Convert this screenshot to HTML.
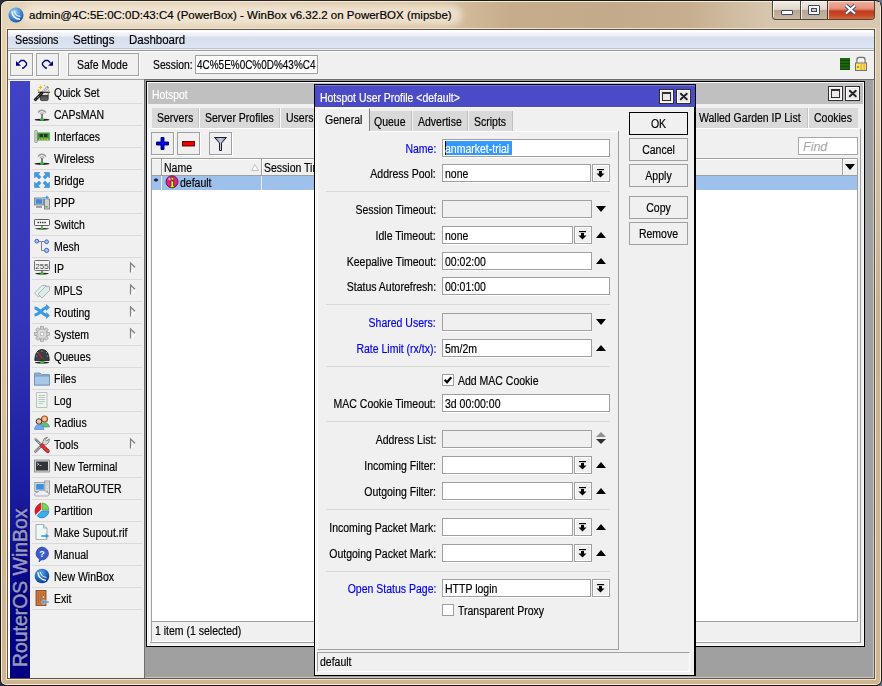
<!DOCTYPE html><html><head><meta charset="utf-8"><style>
*{margin:0;padding:0;box-sizing:border-box}
html,body{width:882px;height:686px;overflow:hidden;background:linear-gradient(90deg,#283048,#6a7488)}
body{font-family:"Liberation Sans",sans-serif;font-size:11px;color:#000;position:relative}
.a{position:absolute}
.t{position:absolute;white-space:nowrap;line-height:13px;font-size:12px;letter-spacing:0;transform:scaleX(0.875);transform-origin:0 0;-webkit-text-stroke:0.18px currentColor}
.r{transform-origin:100% 0}
.c{transform-origin:50% 0}
.btn{position:absolute;border:1px solid #a0a0a0;background:#f0f0f0}
.inp{position:absolute;border:1px solid #a0a0a0;background:#fff}
.dis{background:#f0f0f0}
.blue{color:#0000f0}
svg{position:absolute;overflow:visible}
</style></head><body>
<div class="a" style="left:0px;top:0px;width:882px;height:686px;border-radius:7px 7px 6px 6px;background:#1c1814"></div>
<div class="a" style="left:1px;top:1px;width:880px;height:684px;border-radius:6px 6px 5px 5px;background:#f6ecdc"></div>
<div class="a" style="left:2px;top:2px;width:878px;height:682px;border-radius:5px 5px 4px 4px;background:linear-gradient(#e6d2b4 0,#e2cca8 120px,#dfc69e 320px,#d4bc96 480px,#cdb591 595px,#d0b590 100%)"></div>
<div class="a" style="left:875px;top:2px;width:5px;height:677px;background:linear-gradient(#d8c8b0 0,#d8c8b0 95px,#c8b08c 305px,#d0b690 595px,#d0b690 100%)"></div>
<div class="a" style="left:4px;top:679px;width:874px;height:5px;background:#d0b590"></div>
<div class="a" style="left:2px;top:2px;width:878px;height:26px;border-radius:5px 5px 0 0;background:linear-gradient(90deg,#e4d4ba 0,#e2d0b4 25%,#d8c2a2 50%,#c6ac8a 58%,#c3aa8a 70%,#c6ae8e 78%,#d6c6ae 87%,#d8c8b0 100%)"></div>
<div class="a" style="left:22px;top:5px;width:440px;height:20px;border-radius:10px;background:rgba(246,236,222,0.7);filter:blur(3px)"></div>
<div class="a" style="left:6px;top:28px;width:870px;height:652px;background:#f0e4d2"></div>
<svg style="left:8px;top:7px" width="16" height="16" viewBox="0 0 16 16"><defs><radialGradient id="lg" cx="40%" cy="30%" r="75%"><stop offset="0" stop-color="#a8d4f8"/><stop offset="0.6" stop-color="#3a84d0"/><stop offset="1" stop-color="#1a4e9a"/></radialGradient></defs><circle cx="8" cy="8" r="7.5" fill="url(#lg)"/><path d="M3.8 4.3 A 8.5 8.5 0 0 0 12 12.3" stroke="#fff" stroke-width="1.4" fill="none"/><path d="M6.3 3.8 A 6.2 6.2 0 0 0 12.4 9.4" stroke="#fff" stroke-width="1.1" fill="none" opacity="0.9"/></svg>
<div class="t" style="left:29px;top:7px;font-size:11.5px;line-height:16px;color:#000;letter-spacing:0;transform:none">admin@4C:5E:0C:0D:43:C4 (PowerBox) - WinBox v6.32.2 on PowerBOX (mipsbe)</div>
<div class="a" style="left:772px;top:1px;width:103px;height:19px;border:1px solid #504436;border-top:none;border-radius:0 0 4px 4px;overflow:hidden;background:linear-gradient(#f0ebe4 0,#e4dcd0 40%,#d8ccbc 50%,#b8a890 52%,#c6b6a2 100%);box-shadow:inset 1px 1px 0 rgba(255,255,255,0.8)"><div class="a" style="left:27px;top:0;width:1px;height:18px;background:#504436"></div><div class="a" style="left:28px;top:0;width:1px;height:18px;background:rgba(255,255,255,0.8)"></div><div class="a" style="left:54px;top:0;width:48px;height:18px;border-left:1px solid #503020;background:linear-gradient(#eeb0a0 0,#e49480 40%,#d87058 50%,#c03a1c 55%,#c84828 80%,#d86840 100%);box-shadow:inset 1px 1px 0 rgba(255,230,220,0.8),inset -1px 0 0 rgba(255,230,220,0.5)"></div><div class="a" style="left:8px;top:9px;width:12px;height:5px;background:#fff;border:1px solid #40486a;border-radius:1px"></div><div class="a" style="left:35px;top:4px;width:12px;height:10px;border:1px solid #40486a;border-radius:1px;background:#fff"></div><div class="a" style="left:38px;top:7px;width:6px;height:4px;border:1px solid #40486a;background:#d8c8b0"></div><svg style="left:71px;top:3px" width="13" height="11" viewBox="0 0 13 11"><path d="M2 1.5 L11 9.5 M11 1.5 L2 9.5" stroke="#40486a" stroke-width="4"/><path d="M2 1.5 L11 9.5 M11 1.5 L2 9.5" stroke="#fff" stroke-width="2.2"/></svg></div>
<div class="a" style="left:7px;top:29px;width:868px;height:650px;background:#5e5446"></div>
<div class="a" style="left:8px;top:30px;width:866px;height:648px;background:#f0f0f0"></div>
<div class="a" style="left:8px;top:30px;width:866px;height:18px;background:linear-gradient(#ffffff 0,#fcfdfe 2px,#f1f3f9 3px,#eef1f8 6px,#d8dfee 7px,#d9e0ef 12px,#dee5f3 18px)"></div>
<div class="a" style="left:8px;top:48px;width:866px;height:1px;background:#bcc4d4"></div>
<div class="a" style="left:8px;top:49px;width:866px;height:1px;background:#f0f0f0"></div>
<div class="a" style="left:8px;top:50px;width:866px;height:1px;background:#989898"></div>
<div class="a" style="left:8px;top:51px;width:866px;height:1px;background:#fcfcfc"></div>
<div class="t" style="left:15px;top:34px;transform:scaleX(0.893)">Sessions</div>
<div class="t" style="left:73px;top:34px;transform:scaleX(0.956)">Settings</div>
<div class="t" style="left:129px;top:34px;transform:scaleX(0.957)">Dashboard</div>
<div class="btn" style="left:10px;top:53px;width:23px;height:23px;box-shadow:1px 1px 0 #fff,-1px -1px 0 #fafafa"></div>
<div class="btn" style="left:36px;top:53px;width:23px;height:23px;box-shadow:1px 1px 0 #fff,-1px -1px 0 #fafafa"></div>
<svg style="left:10px;top:53px" width="23" height="23" viewBox="0 0 23 23"><path d="M8.5 10 L11 7.5 H14 L16.5 10 V12 L13.5 15 H12" stroke="#000080" stroke-width="1.3" fill="none"/><path d="M6 8 V12.8 H11Z" fill="#000080"/></svg>
<svg style="left:36px;top:53px" width="23" height="23" viewBox="0 0 23 23"><g transform="translate(23 0) scale(-1 1)"><path d="M8.5 10 L11 7.5 H14 L16.5 10 V12 L13.5 15 H12" stroke="#000080" stroke-width="1.3" fill="none"/><path d="M6 8 V12.8 H11Z" fill="#000080"/></g></svg>
<div class="btn" style="left:68px;top:53px;width:71px;height:23px;box-shadow:1px 1px 0 #fff,-1px -1px 0 #fafafa"></div>
<div class="t" style="left:77px;top:59px;">Safe Mode</div>
<div class="t" style="left:153px;top:59px;transform:scaleX(0.86)">Session:</div>
<div class="inp" style="left:195px;top:55px;width:123px;height:19px"></div>
<div class="t" style="left:197px;top:59px;transform:scaleX(0.83)">4C%5E%0C%0D%43%C4</div>
<div class="a" style="left:840px;top:58px;width:10px;height:12px;background:repeating-linear-gradient(#1e6410 0,#1e6410 2px,#0e4a06 2px,#0e4a06 3px)"></div>
<svg style="left:854px;top:56px" width="14" height="16" viewBox="0 0 14 16"><path d="M3 7 V3.5 Q3 1.5 5 1.5 H9 Q11 1.5 11 3.5 V7" stroke="#707070" stroke-width="1.3" fill="none"/><path d="M4.3 7 V4 Q4.3 2.8 5.5 2.8 H8.5 Q9.7 2.8 9.7 4 V7" stroke="#fff" stroke-width="1" fill="none"/><rect x="1.5" y="7" width="11" height="7.5" fill="#f8e860" stroke="#707070" stroke-width="1"/><rect x="6.5" y="7.5" width="1.3" height="6.5" fill="#f8a040"/><rect x="9.5" y="7.5" width="1.3" height="6.5" fill="#f8a040"/><rect x="3.5" y="10" width="1" height="2" fill="#604020"/></svg>
<div class="a" style="left:8px;top:80px;width:2px;height:598px;background:#fff"></div>
<div class="a" style="left:10px;top:81px;width:20px;height:597px;background:linear-gradient(#4242c6 0,#3434b8 40%,#1a1a9c 70%,#000080 90%,#000080 100%)"></div>
<div class="t" style="left:11px;top:667px;transform-origin:0 0;transform:rotate(-90deg);font-size:19.4px;line-height:19px;letter-spacing:0;color:#9696c8;text-shadow:1px 1px 1px #000040;-webkit-text-stroke:0.5px #9696c8">RouterOS WinBox</div>
<div class="a" style="left:32px;top:103px;width:110px;height:1px;background:#dadada"></div>
<div class="t" style="left:54px;top:87px;">Quick Set</div>
<svg style="left:34px;top:84px" width="16" height="16" viewBox="0 0 16 16"><defs><linearGradient id="qh" x1="0" y1="0" x2="0" y2="1"><stop offset="0" stop-color="#f8f8f8"/><stop offset="0.3" stop-color="#d0d0d0"/><stop offset="0.36" stop-color="#404040"/><stop offset="1" stop-color="#707070"/></linearGradient></defs><path d="M8 9 L13.3 3.7" stroke="#909090" stroke-width="2.6" stroke-linecap="square"/><path d="M8 9 L13.3 3.7" stroke="#fafafa" stroke-width="1.6" stroke-dasharray="1.3 0.7"/><path d="M6.3 8.5 H14.2 V15 Q14.2 16.6 12.6 16.6 H7.9 Q6.3 16.6 6.3 15 Z" fill="url(#qh)" stroke="#181818" stroke-width="0.7"/><rect x="4" y="7.7" width="12" height="1.1" fill="#303030"/><path d="M1.5 15.5 L7.5 9.5" stroke="#101010" stroke-width="2.8" stroke-linecap="square"/><path d="M1.5 15.5 L7.5 9.5" stroke="#d8d8d8" stroke-width="1" stroke-dasharray="0.9 1.1"/><path d="M6.5 1 L7.3 2.8 L9 3.4 L7.3 4.1 L6.5 6 L5.7 4.1 L4 3.4 L5.7 2.8Z" fill="#e0c020"/><path d="M4.3 4.8 L4.9 5.8 L6 6.3 L4.9 6.8 L4.3 7.9 L3.7 6.8 L2.6 6.3 L3.7 5.8Z" fill="#e0c020"/><circle cx="10.5" cy="1.5" r="0.8" fill="#d8b820"/><circle cx="14.5" cy="6.5" r="0.8" fill="#d8b820"/></svg>
<div class="a" style="left:32px;top:125px;width:110px;height:1px;background:#dadada"></div>
<div class="t" style="left:54px;top:109px;">CAPsMAN</div>
<svg style="left:34px;top:106px" width="16" height="16" viewBox="0 0 16 16"><path d="M4 6.5 Q8 2 12 6.5" stroke="#9a9a9a" stroke-width="1.3" fill="none"/><path d="M5.8 8 Q8 5.8 10.2 8" stroke="#b0b0b0" stroke-width="1.1" fill="none"/><rect x="7.1" y="8" width="1.8" height="5.5" fill="#707070"/><ellipse cx="8" cy="13.8" rx="7.5" ry="1.1" fill="#202020"/><ellipse cx="8" cy="13.6" rx="1.9" ry="1.3" fill="#30c030"/></svg>
<div class="a" style="left:32px;top:147px;width:110px;height:1px;background:#dadada"></div>
<div class="t" style="left:54px;top:131px;">Interfaces</div>
<svg style="left:34px;top:128px" width="16" height="16" viewBox="0 0 16 16"><rect x="0.8" y="2.5" width="2.4" height="12" rx="0.6" fill="#d8d8d8" stroke="#808080" stroke-width="0.7"/><rect x="3.2" y="4.5" width="12.6" height="8" fill="#3c9c3c"/><rect x="5.5" y="6" width="3.5" height="3" fill="#303030"/><rect x="10" y="6" width="3.5" height="3" fill="#303030"/><path d="M5 11.2 H15" stroke="#d8c040" stroke-width="1.4" stroke-dasharray="1 0.6"/></svg>
<div class="a" style="left:32px;top:169px;width:110px;height:1px;background:#dadada"></div>
<div class="t" style="left:54px;top:153px;">Wireless</div>
<svg style="left:34px;top:150px" width="16" height="16" viewBox="0 0 16 16"><path d="M4 6.5 Q8 2 12 6.5" stroke="#9a9a9a" stroke-width="1.3" fill="none"/><path d="M5.8 8 Q8 5.8 10.2 8" stroke="#b0b0b0" stroke-width="1.1" fill="none"/><rect x="7.1" y="8" width="1.8" height="5.5" fill="#707070"/><ellipse cx="8" cy="13.8" rx="7.5" ry="1.1" fill="#202020"/><ellipse cx="8" cy="13.6" rx="1.9" ry="1.3" fill="#30c030"/></svg>
<div class="a" style="left:32px;top:191px;width:110px;height:1px;background:#dadada"></div>
<div class="t" style="left:54px;top:175px;">Bridge</div>
<svg style="left:34px;top:172px" width="16" height="16" viewBox="0 0 16 16"><g fill="#3a9ae8" stroke="#1a6ac0" stroke-width="0.4"><path d="M0.5 0.5 H6 L4.3 2.2 L7 4.9 L4.9 7 L2.2 4.3 L0.5 6Z"/><path d="M15.5 0.5 H10 L11.7 2.2 L9 4.9 L11.1 7 L13.8 4.3 L15.5 6Z"/><path d="M0.5 15.5 H6 L4.3 13.8 L7 11.1 L4.9 9 L2.2 11.7 L0.5 10Z"/><path d="M15.5 15.5 H10 L11.7 13.8 L9 11.1 L11.1 9 L13.8 11.7 L15.5 10Z"/></g></svg>
<div class="a" style="left:32px;top:213px;width:110px;height:1px;background:#dadada"></div>
<div class="t" style="left:54px;top:197px;">PPP</div>
<svg style="left:34px;top:194px" width="16" height="16" viewBox="0 0 16 16"><rect x="0.5" y="4" width="9" height="7" fill="#bcc8d4" stroke="#707880" stroke-width="0.8"/><rect x="1.8" y="5.2" width="6.4" height="4.6" fill="#3c8ad8"/><rect x="2" y="12" width="6" height="2" fill="#a0a0a0"/><rect x="10.5" y="5" width="5" height="10" fill="#d0d0d0" stroke="#707070" stroke-width="0.8"/><rect x="11.5" y="12" width="2" height="1.5" fill="#30b030"/><path d="M8 3 H12 V1 L15.5 3.5 L12 6 V4.5 H8Z" fill="#3a9ae8" stroke="#fff" stroke-width="0.4"/></svg>
<div class="a" style="left:32px;top:235px;width:110px;height:1px;background:#dadada"></div>
<div class="t" style="left:54px;top:219px;">Switch</div>
<svg style="left:34px;top:216px" width="16" height="16" viewBox="0 0 16 16"><rect x="0.5" y="3.5" width="15" height="6" rx="0.8" fill="#f8f8f8" stroke="#606060"/><path d="M3.5 6.5 H12.5" stroke="#303030" stroke-width="1.4" stroke-dasharray="1.4 0.9"/><rect x="7.4" y="9.5" width="1.2" height="2.5" fill="#606060"/><ellipse cx="8" cy="12.8" rx="7" ry="0.8" fill="#202020"/><ellipse cx="8" cy="12.6" rx="1.5" ry="1.1" fill="#30c030"/></svg>
<div class="a" style="left:32px;top:257px;width:110px;height:1px;background:#dadada"></div>
<div class="t" style="left:54px;top:241px;">Mesh</div>
<svg style="left:34px;top:238px" width="16" height="16" viewBox="0 0 16 16"><path d="M4.5 3.5 H7.5 V12.5 H10.5" stroke="#808080" stroke-width="1" fill="none"/><path d="M7.5 3.5 H10.5" stroke="#808080" stroke-width="1"/><circle cx="2.8" cy="3.2" r="1.9" fill="#a8c4f4" stroke="#3a64d0" stroke-width="1"/><circle cx="12.6" cy="3.8" r="1.9" fill="#a8c4f4" stroke="#3a64d0" stroke-width="1"/><circle cx="12.6" cy="12.4" r="2.1" fill="#a8c4f4" stroke="#3a64d0" stroke-width="1"/></svg>
<div class="a" style="left:32px;top:279px;width:110px;height:1px;background:#dadada"></div>
<div class="t" style="left:54px;top:263px;">IP</div>
<svg style="left:34px;top:260px" width="16" height="16" viewBox="0 0 16 16"><rect x="0.5" y="0.5" width="15" height="10" rx="1" fill="#f4f4f4" stroke="#707070"/><text x="8" y="8.6" font-size="8" font-family="Liberation Sans" text-anchor="middle" fill="#404040">255</text><rect x="7.3" y="10.5" width="1.4" height="2.5" fill="#606060"/><ellipse cx="8" cy="13.6" rx="7" ry="0.9" fill="#202020"/><ellipse cx="8" cy="13.4" rx="1.7" ry="1.2" fill="#30c030"/></svg>
<svg style="left:129px;top:262px" width="8" height="12" viewBox="0 0 8 12"><path d="M1.5 10.5 L6.5 5.8" stroke="#fff" stroke-width="1.2"/><path d="M1.5 10.5 V1 L6 5.3" stroke="#808080" stroke-width="1.2" fill="none"/></svg>
<div class="a" style="left:32px;top:301px;width:110px;height:1px;background:#dadada"></div>
<div class="t" style="left:54px;top:285px;">MPLS</div>
<svg style="left:34px;top:282px" width="16" height="16" viewBox="0 0 16 16"><path d="M0.5 11 L8 3.5 L12 3.5 L12 7.5 L4.5 15Z" fill="#e8f0f0" stroke="#90a8a8" stroke-width="0.8"/><path d="M4 12 L11.5 4.5 L15.5 4.5 L15.5 8.5 L8 16Z" fill="#e0ecec" stroke="#90a8a8" stroke-width="0.8"/></svg>
<svg style="left:129px;top:284px" width="8" height="12" viewBox="0 0 8 12"><path d="M1.5 10.5 L6.5 5.8" stroke="#fff" stroke-width="1.2"/><path d="M1.5 10.5 V1 L6 5.3" stroke="#808080" stroke-width="1.2" fill="none"/></svg>
<div class="a" style="left:32px;top:323px;width:110px;height:1px;background:#dadada"></div>
<div class="t" style="left:54px;top:307px;">Routing</div>
<svg style="left:34px;top:304px" width="16" height="16" viewBox="0 0 16 16"><path d="M0.5 11 C5 11 9 3.5 13 3.5" stroke="#3a9ae8" stroke-width="3.2" fill="none"/><path d="M0.5 4 C5 4 9 11.5 13 11.5" stroke="#3a9ae8" stroke-width="3.2" fill="none"/><path d="M12 0 L16 3.5 L12 7Z M12 8 L16 11.5 L12 15Z" fill="#3a9ae8"/></svg>
<svg style="left:129px;top:306px" width="8" height="12" viewBox="0 0 8 12"><path d="M1.5 10.5 L6.5 5.8" stroke="#fff" stroke-width="1.2"/><path d="M1.5 10.5 V1 L6 5.3" stroke="#808080" stroke-width="1.2" fill="none"/></svg>
<div class="a" style="left:32px;top:345px;width:110px;height:1px;background:#dadada"></div>
<div class="t" style="left:54px;top:329px;">System</div>
<svg style="left:34px;top:326px" width="16" height="16" viewBox="0 0 16 16"><g transform="translate(8 8)"><circle r="5.5" fill="#d8d8d8" stroke="#909090" stroke-width="0.8"/><g fill="#d0d0d0" stroke="#909090" stroke-width="0.6"><rect x="-1.6" y="-7.5" width="3.2" height="3"/><rect x="-1.6" y="4.5" width="3.2" height="3"/><rect x="-7.5" y="-1.6" width="3" height="3.2"/><rect x="4.5" y="-1.6" width="3" height="3.2"/><rect x="-1.6" y="-7.5" width="3.2" height="3" transform="rotate(45)"/><rect x="-1.6" y="-7.5" width="3.2" height="3" transform="rotate(-45)"/><rect x="-1.6" y="4.5" width="3.2" height="3" transform="rotate(45)"/><rect x="-1.6" y="4.5" width="3.2" height="3" transform="rotate(-45)"/></g><circle r="4.6" fill="#dcdcdc"/><circle r="1.8" fill="#fff" stroke="#909090" stroke-width="0.6"/></g></svg>
<svg style="left:129px;top:328px" width="8" height="12" viewBox="0 0 8 12"><path d="M1.5 10.5 L6.5 5.8" stroke="#fff" stroke-width="1.2"/><path d="M1.5 10.5 V1 L6 5.3" stroke="#808080" stroke-width="1.2" fill="none"/></svg>
<div class="a" style="left:32px;top:367px;width:110px;height:1px;background:#dadada"></div>
<div class="t" style="left:54px;top:351px;">Queues</div>
<svg style="left:34px;top:348px" width="16" height="16" viewBox="0 0 16 16"><path d="M0.8 12.5 C0.8 5 4 1.5 8 1.5 C12 1.5 15.2 5 15.2 12.5 Z" fill="#3a3e46" stroke="#181818" stroke-width="0.8"/><path d="M3 4 L4 5 M8 2.5 V3.8 M13 4 L12 5 M2 8 H3.3 M14 8 H12.7" stroke="#c8c8c8" stroke-width="0.7"/><path d="M4 4.5 L8.5 11" stroke="#e02020" stroke-width="1.1"/><ellipse cx="8" cy="14.6" rx="7.2" ry="1" fill="#181818"/><ellipse cx="8" cy="14.2" rx="2" ry="1.3" fill="#30c030"/></svg>
<div class="a" style="left:32px;top:389px;width:110px;height:1px;background:#dadada"></div>
<div class="t" style="left:54px;top:373px;">Files</div>
<svg style="left:34px;top:370px" width="16" height="16" viewBox="0 0 16 16"><path d="M0.5 3 H6 L7.5 4.5 H15.5 V15 H0.5Z" fill="#8ab4dc" stroke="#6a8cb4" stroke-width="0.8"/><rect x="0.5" y="6" width="15" height="9" fill="#a8c8e8" stroke="#6a8cb4" stroke-width="0.8"/></svg>
<div class="a" style="left:32px;top:411px;width:110px;height:1px;background:#dadada"></div>
<div class="t" style="left:54px;top:395px;">Log</div>
<svg style="left:34px;top:392px" width="16" height="16" viewBox="0 0 16 16"><path d="M2.5 0.5 H13 V15.5 H2.5Z" fill="#eef4f0" stroke="#a8b8b0" stroke-width="0.8"/><path d="M4.5 3.5 H11 M4.5 5.5 H11 M4.5 7.5 H11 M4.5 9.5 H11 M4.5 11.5 H9" stroke="#b0b8b8" stroke-width="0.8"/></svg>
<div class="a" style="left:32px;top:433px;width:110px;height:1px;background:#dadada"></div>
<div class="t" style="left:54px;top:417px;">Radius</div>
<svg style="left:34px;top:414px" width="16" height="16" viewBox="0 0 16 16"><circle cx="10.5" cy="5" r="3" fill="#f0c090" stroke="#a05020" stroke-width="1.2"/><path d="M6 13 Q6.5 8.5 10.5 8.5 Q14.5 8.5 15.5 13Z" fill="#60c080" stroke="#308050" stroke-width="0.5"/><circle cx="5" cy="7.5" r="2.8" fill="#f0c090" stroke="#303030" stroke-width="1"/><path d="M0.5 15.5 Q1 10.5 5 10.5 Q9 10.5 10 15.5Z" fill="#70aaf0" stroke="#3a70c0" stroke-width="0.5"/></svg>
<div class="a" style="left:32px;top:455px;width:110px;height:1px;background:#dadada"></div>
<div class="t" style="left:54px;top:439px;">Tools</div>
<svg style="left:34px;top:436px" width="16" height="16" viewBox="0 0 16 16"><path d="M1.5 15.5 L9.5 7.5" stroke="#787878" stroke-width="2.6" stroke-linecap="round"/><path d="M1.5 15.5 L9.5 7.5" stroke="#e4e4f0" stroke-width="1.1" stroke-dasharray="0.8 0.9"/><path d="M8.3 8.7 L9 5.5 Q9.5 1.5 13.5 1.2 L11.3 3.6 L12.6 5 L15.2 2.8 Q15.5 7.5 11.5 8.8 Z" fill="#d8d8d8" stroke="#787878" stroke-width="0.9"/><path d="M1.6 3.4 L7.5 9.2" stroke="#787878" stroke-width="2.4" stroke-linecap="round"/><path d="M1.6 3.4 L7.5 9.2" stroke="#f0f0f0" stroke-width="1" stroke-dasharray="0.8 0.9"/><path d="M8 9.6 L13.8 15.2" stroke="#a81818" stroke-width="3.8" stroke-linecap="round"/><path d="M8 9.6 L13.8 15.2" stroke="#e03434" stroke-width="2.4" stroke-linecap="round"/></svg>
<svg style="left:129px;top:438px" width="8" height="12" viewBox="0 0 8 12"><path d="M1.5 10.5 L6.5 5.8" stroke="#fff" stroke-width="1.2"/><path d="M1.5 10.5 V1 L6 5.3" stroke="#808080" stroke-width="1.2" fill="none"/></svg>
<div class="a" style="left:32px;top:477px;width:110px;height:1px;background:#dadada"></div>
<div class="t" style="left:54px;top:461px;">New Terminal</div>
<svg style="left:34px;top:458px" width="16" height="16" viewBox="0 0 16 16"><rect x="0.5" y="2" width="15" height="12" fill="#d8d8d8" stroke="#808080" stroke-width="0.8"/><rect x="2" y="3.5" width="12" height="9" fill="#303438"/><path d="M3 5 L5 6.2 L3 7.4" stroke="#d0d0d0" stroke-width="0.8" fill="none"/><path d="M5.5 7.5 H7.5" stroke="#d0d0d0" stroke-width="0.8"/></svg>
<div class="a" style="left:32px;top:499px;width:110px;height:1px;background:#dadada"></div>
<div class="t" style="left:54px;top:483px;">MetaROUTER</div>
<svg style="left:34px;top:480px" width="16" height="16" viewBox="0 0 16 16"><rect x="0.8" y="2.5" width="10.5" height="9" fill="#dcdcdc" stroke="#909090" stroke-width="0.8"/><rect x="2.2" y="4" width="7.6" height="5.6" fill="#3a90e0"/><rect x="10.8" y="1" width="4.8" height="13" fill="#e4e4e4" stroke="#909090" stroke-width="0.8"/><rect x="11.8" y="2.5" width="2.8" height="1.2" fill="#fff" stroke="#a0a0a0" stroke-width="0.4"/><rect x="11.8" y="4.6" width="2.8" height="1.2" fill="#fff" stroke="#a0a0a0" stroke-width="0.4"/><rect x="11.8" y="7" width="2.8" height="1.6" fill="#f0f0f0" stroke="#a0a0a0" stroke-width="0.4"/><rect x="12.6" y="10.6" width="1.4" height="1" fill="#30c030"/><path d="M1.8 16 Q0.2 15.8 0.6 13.8 Q1.4 12 3.8 12.3 Q5.2 9.6 8.3 10.4 Q11 9.4 12.3 12.2 Q15.4 12.2 15.2 14.8 Q14.8 16 13.2 16 Z" fill="#eeeef6" stroke="#8a8aa4" stroke-width="0.7"/></svg>
<div class="a" style="left:32px;top:521px;width:110px;height:1px;background:#dadada"></div>
<div class="t" style="left:54px;top:505px;">Partition</div>
<svg style="left:34px;top:502px" width="16" height="16" viewBox="0 0 16 16"><path d="M8.2 7.7 V1 Q14.2 1.5 14.9 7.7 Z" fill="#7ad850" stroke="#48a028" stroke-width="0.7"/><path d="M6.8 0.9 V7.4 L1.5 12.6 Q-0.8 5 6.8 0.9 Z" fill="#e41830" stroke="#b01020" stroke-width="0.6"/><path d="M3.1 13.7 L7.7 8.9 H14.9 Q14.6 14 9 15.8 Q5.5 16.4 3.1 13.7 Z" fill="#38b0e8" stroke="#1a70b8" stroke-width="0.7"/></svg>
<div class="a" style="left:32px;top:543px;width:110px;height:1px;background:#dadada"></div>
<div class="t" style="left:54px;top:527px;">Make Supout.rif</div>
<svg style="left:34px;top:524px" width="16" height="16" viewBox="0 0 16 16"><path d="M2 0.5 H9.5 L13 4 V15.5 H2Z" fill="#f0f8f8" stroke="#90a0a0" stroke-width="0.8"/><path d="M9.5 0.5 V4 H13" fill="#d8e4e4" stroke="#90a0a0" stroke-width="0.8"/><path d="M7 11 H11.5 V9 L15.5 12 L11.5 15 V13 H7Z" fill="#3a9ae8" stroke="#fff" stroke-width="0.4"/></svg>
<div class="a" style="left:32px;top:565px;width:110px;height:1px;background:#dadada"></div>
<div class="t" style="left:54px;top:549px;">Manual</div>
<svg style="left:34px;top:546px" width="16" height="16" viewBox="0 0 16 16"><path d="M8 1 A7 6.5 0 1 1 7 14 L5 16 L5.5 13 A7 6.5 0 0 1 8 1Z" fill="#3a5ad0" stroke="#1a3090" stroke-width="0.6"/><text x="8" y="11" font-size="9" font-weight="bold" font-family="Liberation Sans" text-anchor="middle" fill="#fff">?</text></svg>
<div class="a" style="left:32px;top:587px;width:110px;height:1px;background:#dadada"></div>
<div class="t" style="left:54px;top:571px;">New WinBox</div>
<svg style="left:34px;top:568px" width="16" height="16" viewBox="0 0 16 16"><defs><radialGradient id="nw" cx="40%" cy="30%" r="75%"><stop offset="0" stop-color="#6aaaf0"/><stop offset="0.6" stop-color="#1a60c0"/><stop offset="1" stop-color="#0a3a90"/></radialGradient></defs><circle cx="8" cy="8" r="7.3" fill="url(#nw)"/><path d="M3.8 4.3 A 8.5 8.5 0 0 0 12 12.3" stroke="#fff" stroke-width="1.3" fill="none"/><path d="M6.3 3.8 A 6.2 6.2 0 0 0 12.4 9.4" stroke="#fff" stroke-width="1" fill="none" opacity="0.9"/></svg>
<div class="a" style="left:32px;top:609px;width:110px;height:1px;background:#dadada"></div>
<div class="t" style="left:54px;top:593px;">Exit</div>
<svg style="left:34px;top:590px" width="16" height="16" viewBox="0 0 16 16"><rect x="2" y="0.5" width="10" height="15" fill="#c87840" stroke="#804018" stroke-width="0.8"/><path d="M4.5 2.5 V13.5 M7 2.5 V13.5 M9.5 2.5 V13.5" stroke="#a05a28" stroke-width="0.6"/><circle cx="9.5" cy="7" r="0.8" fill="#f0f0f0"/><path d="M7 12 L10 9.5 V11 H15 V13 H10 V14.5Z" fill="#3a9ae8" stroke="#fff" stroke-width="0.4"/></svg>
<div class="a" style="left:8px;top:79px;width:866px;height:1px;background:#a0a0a0"></div>
<div class="a" style="left:144px;top:79px;width:730px;height:599px;background:#6e6e6e"></div>
<div class="a" style="left:145px;top:80px;width:729px;height:598px;background:#a0a0a0"></div>
<div class="a" style="left:873px;top:80px;width:1px;height:598px;background:#c8c8c8"></div>
<div class="a" style="left:145px;top:677px;width:729px;height:1px;background:#c8c8c8"></div>
<div class="a" style="left:146px;top:81px;width:719px;height:566px;background:#000"></div>
<div class="a" style="left:147px;top:82px;width:717px;height:564px;background:#fafafa"></div>
<div class="a" style="left:148px;top:83px;width:715px;height:562px;background:#f0f0f0"></div>
<div class="a" style="left:148px;top:83px;width:715px;height:21px;background:#c0c0c0"></div>
<div class="t" style="left:152px;top:89px;color:#fff;transform:scaleX(0.86)">Hotspot</div>
<div class="a" style="left:828px;top:86px;width:15px;height:15px;background:#ece8ec;border:1px solid #303030;box-shadow:inset 0 0 0 1px #fff"></div>
<div class="a" style="left:845px;top:86px;width:15px;height:15px;background:#ece8ec;border:1px solid #303030;box-shadow:inset 0 0 0 1px #fff"></div>
<div class="a" style="left:831px;top:89px;width:9px;height:9px;border:1px solid #303030;border-top-width:2px;background:#ece8ec"></div>
<svg style="left:849px;top:90px" width="8" height="8" viewBox="0 0 8 8"><path d="M0.8 0.8 L6.8 6.3 M6.8 0.8 L0.8 6.3" stroke="#202020" stroke-width="1.9" stroke-linecap="round"/></svg>
<div class="a" style="left:152px;top:108px;width:46px;height:20px;background:#d9d9d9"></div>
<div class="a" style="left:198px;top:108px;width:1px;height:20px;background:#c4c4c4"></div>
<div class="a" style="left:199px;top:108px;width:1px;height:20px;background:#fafafa"></div>
<div class="t" style="left:157px;top:112px;">Servers</div>
<div class="a" style="left:200px;top:108px;width:79px;height:20px;background:#d9d9d9"></div>
<div class="a" style="left:279px;top:108px;width:1px;height:20px;background:#c4c4c4"></div>
<div class="a" style="left:280px;top:108px;width:1px;height:20px;background:#fafafa"></div>
<div class="t" style="left:205px;top:112px;">Server Profiles</div>
<div class="a" style="left:281px;top:108px;width:49px;height:20px;background:#d9d9d9"></div>
<div class="a" style="left:330px;top:108px;width:1px;height:20px;background:#c4c4c4"></div>
<div class="a" style="left:331px;top:108px;width:1px;height:20px;background:#fafafa"></div>
<div class="t" style="left:286px;top:112px;">Users</div>
<div class="a" style="left:692px;top:108px;width:115px;height:20px;background:#d9d9d9"></div>
<div class="a" style="left:807px;top:108px;width:1px;height:20px;background:#c4c4c4"></div>
<div class="a" style="left:808px;top:108px;width:1px;height:20px;background:#fafafa"></div>
<div class="t" style="left:699px;top:112px;">Walled Garden IP List</div>
<div class="a" style="left:809px;top:108px;width:49px;height:20px;background:#d9d9d9"></div>
<div class="t" style="left:814px;top:112px;">Cookies</div>
<div class="a" style="left:149px;top:128px;width:712px;height:515px;background:#f0f0f0;border-left:1px solid #fff;border-top:1px solid #fff;border-right:1px solid #a0a0a0"></div>
<div class="a" style="left:151px;top:132px;width:23px;height:23px;background:#f0f0f0;border:1px solid #a0a0a0;box-shadow:1px 1px 0 #fff"></div>
<div class="a" style="left:177px;top:132px;width:23px;height:23px;background:#f0f0f0;border:1px solid #a0a0a0;box-shadow:1px 1px 0 #fff"></div>
<div class="a" style="left:209px;top:132px;width:23px;height:23px;background:#f0f0f0;border:1px solid #a0a0a0;box-shadow:1px 1px 0 #fff"></div>
<svg style="left:151px;top:132px" width="23" height="23" viewBox="0 0 23 23"><path d="M10 5.5 H13 V10 H17.5 V13 H13 V17.5 H10 V13 H5.5 V10 H10Z" fill="#0000f0" stroke="#000050" stroke-width="0.9"/></svg>
<svg style="left:177px;top:132px" width="23" height="23" viewBox="0 0 23 23"><rect x="5.5" y="9.5" width="12" height="4.5" fill="#f00000" stroke="#500000" stroke-width="0.9"/></svg>
<svg style="left:209px;top:132px" width="23" height="23" viewBox="0 0 23 23"><defs><linearGradient id="fg" x1="0" x2="1"><stop offset="0" stop-color="#6a7a9a"/><stop offset="0.5" stop-color="#c8d0e0"/><stop offset="1" stop-color="#6a7a9a"/></linearGradient></defs><path d="M5.5 5.5 H17.5 L12.5 11 V18.5 L10.5 18.5 V11 Z" fill="url(#fg)" stroke="#1a1a30" stroke-width="1"/></svg>
<div class="a" style="left:798px;top:137px;width:60px;height:18px;background:#fff;border:1px solid #a8a8a8"></div>
<div class="t" style="left:803px;top:141px;color:#a4a4a4;font-style:italic;font-size:12.5px;transform:none;-webkit-text-stroke:0">Find</div>
<div class="a" style="left:151px;top:158px;width:707px;height:464px;background:#fff;border:1px solid #a0a0a0"></div>
<div class="a" style="left:152px;top:159px;width:705px;height:17px;background:#f0f0f0;border-bottom:1px solid #a0a0a0;border-top:1px solid #fff"></div>
<div class="a" style="left:161px;top:159px;width:1px;height:16px;background:#a0a0a0"></div>
<div class="a" style="left:162px;top:159px;width:1px;height:16px;background:#fff"></div>
<div class="a" style="left:261px;top:159px;width:1px;height:16px;background:#a0a0a0"></div>
<div class="a" style="left:262px;top:159px;width:1px;height:16px;background:#fff"></div>
<div class="a" style="left:842px;top:159px;width:1px;height:16px;background:#a0a0a0"></div>
<div class="a" style="left:843px;top:159px;width:1px;height:16px;background:#fff"></div>
<div class="t" style="left:164px;top:162px;">Name</div>
<svg style="left:251px;top:164px" width="8" height="7" viewBox="0 0 8 7"><path d="M4 0.5 L7.5 6.5 H0.5 Z" fill="#fff" stroke="#c0c0c0"/></svg>
<div class="t" style="left:264px;top:162px;">Session Timeout</div>
<svg style="left:845px;top:164px" width="10" height="6" viewBox="0 0 10 6"><path d="M0 0 H10 L5 6 Z" fill="#000"/></svg>
<div class="a" style="left:152px;top:176px;width:705px;height:14px;background:#9dc1ea"></div>
<div class="a" style="left:161px;top:176px;width:1px;height:14px;background:#e8f0fa"></div>
<div class="a" style="left:261px;top:176px;width:1px;height:14px;background:#e8f0fa"></div>
<svg style="left:154px;top:178px" width="4" height="4" viewBox="0 0 4 4"><path d="M2 0 V4 M0 1.2 L4 2.8 M0 2.8 L4 1.2" stroke="#000" stroke-width="0.8"/></svg>
<svg style="left:165px;top:175px" width="14" height="14" viewBox="0 0 14 14"><circle cx="7" cy="6.8" r="6" fill="#e0208a" stroke="#601040" stroke-width="0.9"/><circle cx="4.5" cy="4" r="1.2" fill="#f8a0d0"/><path d="M6 6 H8.5 V11 H9.5 V12.5 H5 V11 H6 V7.3 H5.3Z" fill="#f8f020" stroke="#403000" stroke-width="0.7"/><circle cx="7.5" cy="3.8" r="1.3" fill="#f8f020" stroke="#403000" stroke-width="0.6"/></svg>
<div class="t" style="left:180px;top:177px;">default</div>
<div class="a" style="left:151px;top:621px;width:707px;height:21px;background:#f0f0f0;border-top:1px solid #a0a0a0;border-left:1px solid #a0a0a0;border-bottom:1px solid #fff"></div>
<div class="a" style="left:150px;top:642px;width:710px;height:1px;background:#a0a0a0"></div>
<div class="t" style="left:155px;top:625px;">1 item (1 selected)</div>
<div class="a" style="left:314px;top:84px;width:382px;height:592px;background:#000"></div>
<div class="a" style="left:315px;top:85px;width:379px;height:590px;background:#fff"></div>
<div class="a" style="left:316px;top:86px;width:378px;height:589px;background:#f0f0f0"></div>
<div class="a" style="left:315px;top:85px;width:380px;height:22px;background:#4b4bc8;border-top:1px solid #7272e0"></div>
<div class="a" style="left:315px;top:107px;width:379px;height:1px;background:#fafaf4"></div>
<div class="t" style="left:320px;top:91px;color:#fff;line-height:14px;transform:scaleX(0.87)">Hotspot User Profile &lt;default&gt;</div>
<div class="a" style="left:659px;top:89px;width:15px;height:15px;background:#ece8ec;border:1px solid #303030;box-shadow:inset 0 0 0 1px #fff"></div>
<div class="a" style="left:676px;top:89px;width:15px;height:15px;background:#ece8ec;border:1px solid #303030;box-shadow:inset 0 0 0 1px #fff"></div>
<div class="a" style="left:662px;top:92px;width:9px;height:9px;border:1px solid #303030;border-top-width:2px;background:#ece8ec"></div>
<svg style="left:680px;top:93px" width="8" height="8" viewBox="0 0 8 8"><path d="M0.8 0.8 L6.8 6.3 M6.8 0.8 L0.8 6.3" stroke="#202020" stroke-width="1.9" stroke-linecap="round"/></svg>
<div class="a" style="left:370px;top:111px;width:41px;height:20px;background:#d9d9d9"></div>
<div class="a" style="left:411px;top:111px;width:1px;height:20px;background:#c0c0c0"></div>
<div class="a" style="left:413px;top:111px;width:54px;height:20px;background:#d9d9d9"></div>
<div class="a" style="left:467px;top:111px;width:1px;height:20px;background:#c0c0c0"></div>
<div class="a" style="left:469px;top:111px;width:43px;height:20px;background:#d9d9d9"></div>
<div class="a" style="left:512px;top:111px;width:1px;height:20px;background:#c0c0c0"></div>
<div class="a" style="left:317px;top:108px;width:53px;height:23px;background:#f0f0f0;border-left:1px solid #fff;border-top:1px solid #fff;border-right:1px solid #808080"></div>
<div class="t" style="left:325px;top:114px;">General</div>
<div class="t" style="left:374px;top:116px;">Queue</div>
<div class="t" style="left:418px;top:116px;">Advertise</div>
<div class="t" style="left:474px;top:116px;">Scripts</div>
<div class="a" style="left:317px;top:131px;width:302px;height:519px;background:#f0f0f0;border-left:1px solid #fff;border-right:1px solid #a0a0a0;border-bottom:1px solid #a0a0a0"></div>
<div class="a" style="left:370px;top:131px;width:248px;height:1px;background:#fff"></div>
<div class="a" style="left:629px;top:112px;width:59px;height:23px;background:#f0f0f0;border:1px solid #a0a0a0;border-color:#000"></div>
<div class="t c" style="left:629px;top:118px;width:59px;text-align:center">OK</div>
<div class="a" style="left:629px;top:138px;width:59px;height:23px;background:#f0f0f0;border:1px solid #a0a0a0;"></div>
<div class="t c" style="left:629px;top:144px;width:59px;text-align:center">Cancel</div>
<div class="a" style="left:629px;top:164px;width:59px;height:23px;background:#f0f0f0;border:1px solid #a0a0a0;"></div>
<div class="t c" style="left:629px;top:170px;width:59px;text-align:center">Apply</div>
<div class="a" style="left:629px;top:196px;width:59px;height:23px;background:#f0f0f0;border:1px solid #a0a0a0;"></div>
<div class="t c" style="left:629px;top:202px;width:59px;text-align:center">Copy</div>
<div class="a" style="left:629px;top:222px;width:59px;height:23px;background:#f0f0f0;border:1px solid #a0a0a0;"></div>
<div class="t c" style="left:629px;top:228px;width:59px;text-align:center">Remove</div>
<div class="a" style="left:317px;top:652px;width:373px;height:20px;background:#f0f0f0;border-top:1px solid #a0a0a0;border-left:1px solid #a0a0a0;border-bottom:1px solid #fff;border-right:1px solid #fff"></div>
<div class="t" style="left:320px;top:656px;">default</div>
<div class="t r" style="right:446px;top:143px;color:#0000f0">Name:</div>
<div class="a" style="left:442px;top:139px;width:168px;height:18px;background:#fff;border:1px solid #a0a0a0;box-shadow:0 1px 0 #fff"></div>
<div class="a" style="left:445px;top:141px;width:67px;height:14px;background:#3399ff"></div>
<div class="a" style="left:445px;top:141px;width:1px;height:14px;background:#000"></div>
<div class="t" style="left:445px;top:143px;color:#fff">anmarket-trial</div>
<div class="t r" style="right:446px;top:168px;">Address Pool:</div>
<div class="a" style="left:442px;top:164px;width:149px;height:18px;background:#fff;border:1px solid #a0a0a0;box-shadow:0 1px 0 #fff"></div>
<div class="t" style="left:445px;top:168px;">none</div>
<div class="a" style="left:592px;top:164px;width:18px;height:18px;background:#f0f0f0;border:1px solid #a0a0a0;box-shadow:inset 0 0 0 1px #fff,0 1px 0 #fff"></div>
<svg style="left:592px;top:164px" width="18" height="18" viewBox="0 0 18 18"><rect x="5" y="5" width="7" height="1.2" fill="#000"/><rect x="7" y="7" width="3" height="3" fill="#000"/><path d="M4.5 9.5 H12.5 L8.5 13.5Z" fill="#000"/></svg>
<div class="a" style="left:326px;top:191px;width:284px;height:1px;background:#d8d8d8"></div>
<div class="t r" style="right:446px;top:204px;">Session Timeout:</div>
<div class="a" style="left:442px;top:200px;width:150px;height:18px;background:#f0f0f0;border:1px solid #a0a0a0;box-shadow:0 1px 0 #fff"></div>
<svg style="left:596px;top:206px" width="10" height="6" viewBox="0 0 10 6"><path d="M0 0 H10 L5 6 Z" fill="#000"/></svg>
<div class="t r" style="right:446px;top:230px;">Idle Timeout:</div>
<div class="a" style="left:442px;top:226px;width:131px;height:18px;background:#fff;border:1px solid #a0a0a0;box-shadow:0 1px 0 #fff"></div>
<div class="t" style="left:445px;top:230px;">none</div>
<div class="a" style="left:574px;top:226px;width:18px;height:18px;background:#f0f0f0;border:1px solid #a0a0a0;box-shadow:inset 0 0 0 1px #fff,0 1px 0 #fff"></div>
<svg style="left:574px;top:226px" width="18" height="18" viewBox="0 0 18 18"><rect x="5" y="5" width="7" height="1.2" fill="#000"/><rect x="7" y="7" width="3" height="3" fill="#000"/><path d="M4.5 9.5 H12.5 L8.5 13.5Z" fill="#000"/></svg>
<svg style="left:596px;top:232px" width="10" height="6" viewBox="0 0 10 6"><path d="M0 6 H10 L5 0 Z" fill="#000"/></svg>
<div class="t r" style="right:446px;top:256px;">Keepalive Timeout:</div>
<div class="a" style="left:442px;top:252px;width:150px;height:18px;background:#fff;border:1px solid #a0a0a0;box-shadow:0 1px 0 #fff"></div>
<div class="t" style="left:445px;top:256px;">00:02:00</div>
<svg style="left:596px;top:258px" width="10" height="6" viewBox="0 0 10 6"><path d="M0 6 H10 L5 0 Z" fill="#000"/></svg>
<div class="t r" style="right:446px;top:281px;">Status Autorefresh:</div>
<div class="a" style="left:442px;top:277px;width:168px;height:18px;background:#fff;border:1px solid #a0a0a0;box-shadow:0 1px 0 #fff"></div>
<div class="t" style="left:445px;top:281px;">00:01:00</div>
<div class="a" style="left:326px;top:304px;width:284px;height:1px;background:#d8d8d8"></div>
<div class="t r" style="right:446px;top:317px;color:#0000f0">Shared Users:</div>
<div class="a" style="left:442px;top:313px;width:150px;height:18px;background:#f0f0f0;border:1px solid #a0a0a0;box-shadow:0 1px 0 #fff"></div>
<svg style="left:596px;top:319px" width="10" height="6" viewBox="0 0 10 6"><path d="M0 0 H10 L5 6 Z" fill="#000"/></svg>
<div class="t r" style="right:446px;top:343px;color:#0000f0">Rate Limit (rx/tx):</div>
<div class="a" style="left:442px;top:339px;width:150px;height:18px;background:#fff;border:1px solid #a0a0a0;box-shadow:0 1px 0 #fff"></div>
<div class="t" style="left:445px;top:343px;">5m/2m</div>
<svg style="left:596px;top:345px" width="10" height="6" viewBox="0 0 10 6"><path d="M0 6 H10 L5 0 Z" fill="#000"/></svg>
<div class="a" style="left:326px;top:366px;width:284px;height:1px;background:#d8d8d8"></div>
<div class="a" style="left:442px;top:374px;width:12px;height:12px;background:#fff;border:1px solid #a0a0a0"></div>
<svg style="left:444px;top:376px" width="8" height="8" viewBox="0 0 8 8"><path d="M0.7 3.8 L3 6.3 L7.3 1.2" stroke="#000" stroke-width="2.1" fill="none"/></svg>
<div class="t" style="left:458px;top:375px;">Add MAC Cookie</div>
<div class="t r" style="right:446px;top:398px;">MAC Cookie Timeout:</div>
<div class="a" style="left:442px;top:394px;width:168px;height:18px;background:#fff;border:1px solid #a0a0a0;box-shadow:0 1px 0 #fff"></div>
<div class="t" style="left:445px;top:398px;">3d 00:00:00</div>
<div class="a" style="left:326px;top:421px;width:284px;height:1px;background:#d8d8d8"></div>
<div class="t r" style="right:446px;top:434px;">Address List:</div>
<div class="a" style="left:442px;top:430px;width:150px;height:18px;background:#f0f0f0;border:1px solid #a0a0a0;box-shadow:0 1px 0 #fff"></div>
<svg style="left:596px;top:432px" width="10" height="12" viewBox="0 0 10 12"><path d="M0 5 H10 L5 0 Z" fill="#909090"/><path d="M0 7 H10 L5 12 Z" fill="#303030"/></svg>
<div class="t r" style="right:446px;top:460px;">Incoming Filter:</div>
<div class="a" style="left:442px;top:456px;width:131px;height:18px;background:#fff;border:1px solid #a0a0a0;box-shadow:0 1px 0 #fff"></div>
<div class="a" style="left:574px;top:456px;width:18px;height:18px;background:#f0f0f0;border:1px solid #a0a0a0;box-shadow:inset 0 0 0 1px #fff,0 1px 0 #fff"></div>
<svg style="left:574px;top:456px" width="18" height="18" viewBox="0 0 18 18"><rect x="5" y="5" width="7" height="1.2" fill="#000"/><rect x="7" y="7" width="3" height="3" fill="#000"/><path d="M4.5 9.5 H12.5 L8.5 13.5Z" fill="#000"/></svg>
<svg style="left:596px;top:462px" width="10" height="6" viewBox="0 0 10 6"><path d="M0 6 H10 L5 0 Z" fill="#000"/></svg>
<div class="t r" style="right:446px;top:486px;">Outgoing Filter:</div>
<div class="a" style="left:442px;top:482px;width:131px;height:18px;background:#fff;border:1px solid #a0a0a0;box-shadow:0 1px 0 #fff"></div>
<div class="a" style="left:574px;top:482px;width:18px;height:18px;background:#f0f0f0;border:1px solid #a0a0a0;box-shadow:inset 0 0 0 1px #fff,0 1px 0 #fff"></div>
<svg style="left:574px;top:482px" width="18" height="18" viewBox="0 0 18 18"><rect x="5" y="5" width="7" height="1.2" fill="#000"/><rect x="7" y="7" width="3" height="3" fill="#000"/><path d="M4.5 9.5 H12.5 L8.5 13.5Z" fill="#000"/></svg>
<svg style="left:596px;top:488px" width="10" height="6" viewBox="0 0 10 6"><path d="M0 6 H10 L5 0 Z" fill="#000"/></svg>
<div class="a" style="left:326px;top:509px;width:284px;height:1px;background:#d8d8d8"></div>
<div class="t r" style="right:446px;top:522px;">Incoming Packet Mark:</div>
<div class="a" style="left:442px;top:518px;width:131px;height:18px;background:#fff;border:1px solid #a0a0a0;box-shadow:0 1px 0 #fff"></div>
<div class="a" style="left:574px;top:518px;width:18px;height:18px;background:#f0f0f0;border:1px solid #a0a0a0;box-shadow:inset 0 0 0 1px #fff,0 1px 0 #fff"></div>
<svg style="left:574px;top:518px" width="18" height="18" viewBox="0 0 18 18"><rect x="5" y="5" width="7" height="1.2" fill="#000"/><rect x="7" y="7" width="3" height="3" fill="#000"/><path d="M4.5 9.5 H12.5 L8.5 13.5Z" fill="#000"/></svg>
<svg style="left:596px;top:524px" width="10" height="6" viewBox="0 0 10 6"><path d="M0 6 H10 L5 0 Z" fill="#000"/></svg>
<div class="t r" style="right:446px;top:548px;">Outgoing Packet Mark:</div>
<div class="a" style="left:442px;top:544px;width:131px;height:18px;background:#fff;border:1px solid #a0a0a0;box-shadow:0 1px 0 #fff"></div>
<div class="a" style="left:574px;top:544px;width:18px;height:18px;background:#f0f0f0;border:1px solid #a0a0a0;box-shadow:inset 0 0 0 1px #fff,0 1px 0 #fff"></div>
<svg style="left:574px;top:544px" width="18" height="18" viewBox="0 0 18 18"><rect x="5" y="5" width="7" height="1.2" fill="#000"/><rect x="7" y="7" width="3" height="3" fill="#000"/><path d="M4.5 9.5 H12.5 L8.5 13.5Z" fill="#000"/></svg>
<svg style="left:596px;top:550px" width="10" height="6" viewBox="0 0 10 6"><path d="M0 6 H10 L5 0 Z" fill="#000"/></svg>
<div class="a" style="left:326px;top:571px;width:284px;height:1px;background:#d8d8d8"></div>
<div class="t r" style="right:446px;top:583px;color:#0000f0">Open Status Page:</div>
<div class="a" style="left:442px;top:579px;width:149px;height:18px;background:#fff;border:1px solid #a0a0a0;box-shadow:0 1px 0 #fff"></div>
<div class="t" style="left:445px;top:583px;">HTTP login</div>
<div class="a" style="left:592px;top:579px;width:18px;height:18px;background:#f0f0f0;border:1px solid #a0a0a0;box-shadow:inset 0 0 0 1px #fff,0 1px 0 #fff"></div>
<svg style="left:592px;top:579px" width="18" height="18" viewBox="0 0 18 18"><rect x="5" y="5" width="7" height="1.2" fill="#000"/><rect x="7" y="7" width="3" height="3" fill="#000"/><path d="M4.5 9.5 H12.5 L8.5 13.5Z" fill="#000"/></svg>
<div class="a" style="left:442px;top:604px;width:12px;height:12px;background:#fff;border:1px solid #a0a0a0"></div>
<div class="t" style="left:458px;top:605px;">Transparent Proxy</div>
</body></html>
